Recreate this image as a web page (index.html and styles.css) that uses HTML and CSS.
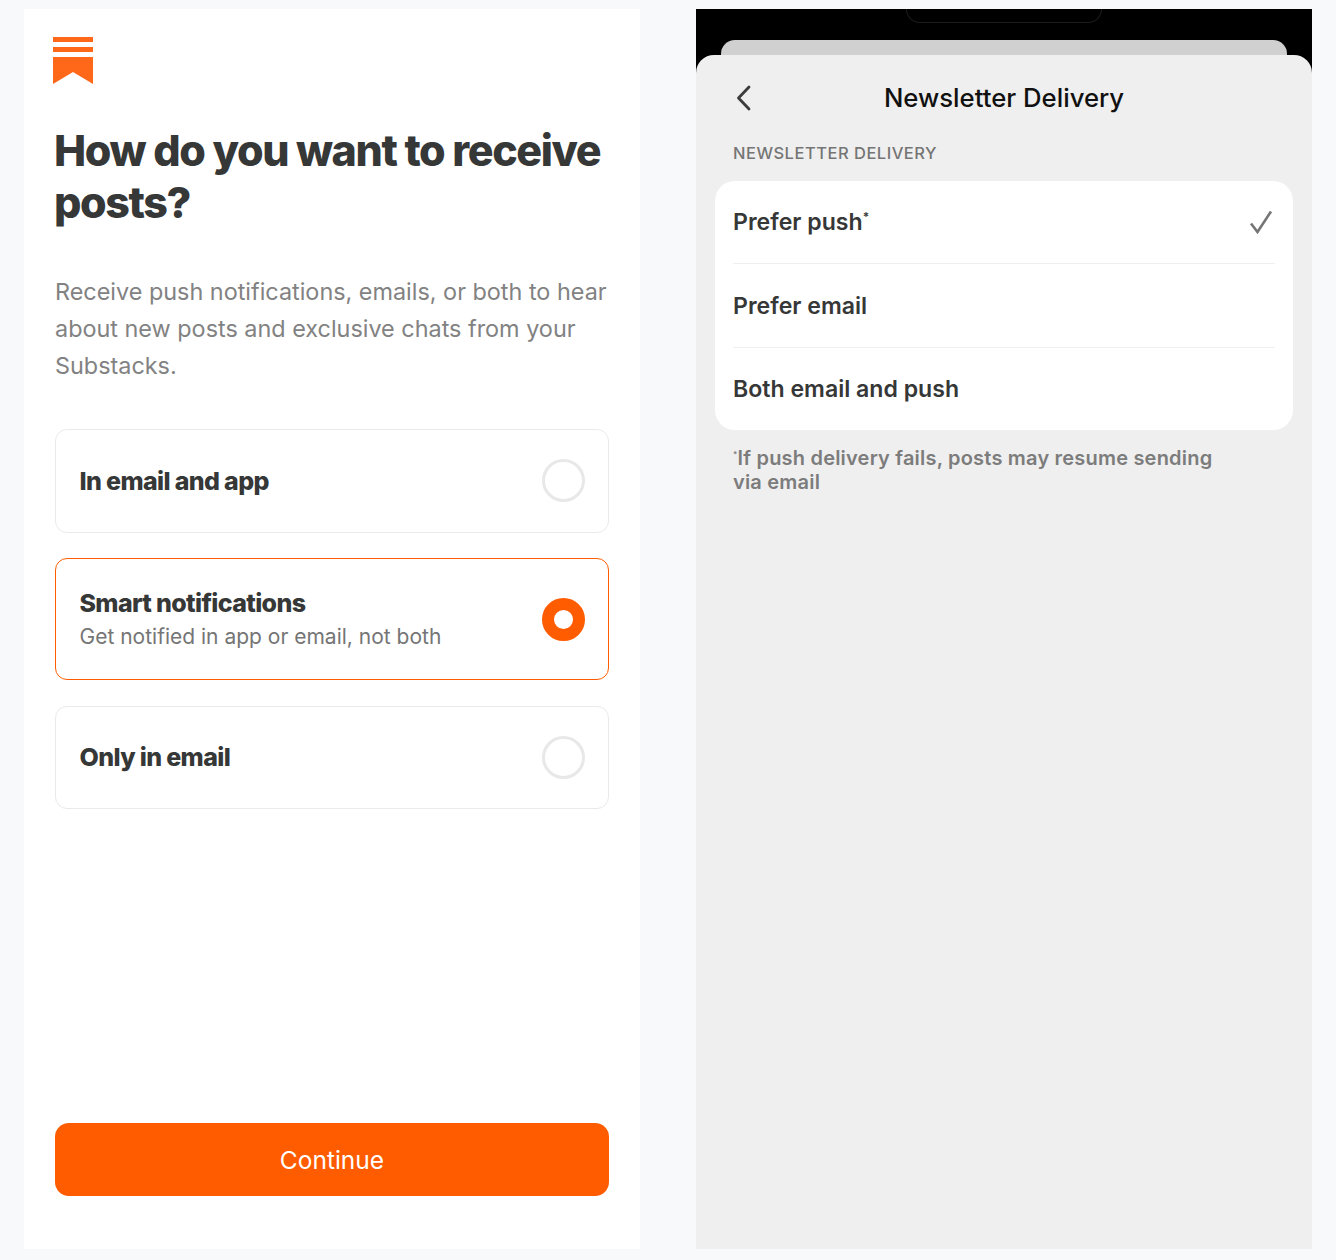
FILE: index.html
```html
<!DOCTYPE html>
<html lang="en">
<head>
  <meta charset="UTF-8" />
  <meta name="viewport" content="width=device-width, initial-scale=1.0"/>
  <title>Newsletter delivery</title>
  <link rel="stylesheet" href="styles.css">
</head>
<body>
  <div class="screens">
    <section class="onboarding">
      <svg class="logo" width="40" height="47" viewBox="0 0 40 47">
        <path d="M0 0H40V5H0ZM0 10H40V15H0ZM0 20H40V47L20 35 0 47Z" fill="#ff6719"/>
      </svg>
      <h1>How do you want to receive posts?</h1>
      <p class="intro">Receive push notifications, emails, or both to hear about new posts and exclusive chats from your Substacks.</p>

      <div class="options">
        <div class="option">
          <div class="option-title">In email and app</div>
          <span class="radio"></span>
        </div>
        <div class="option option-selected">
          <div>
            <div class="option-title">Smart notifications</div>
            <div class="option-sub">Get notified in app or email, not both</div>
          </div>
          <span class="radio radio-on"></span>
        </div>
        <div class="option">
          <div class="option-title">Only in email</div>
          <span class="radio"></span>
        </div>
      </div>

      <button class="continue">Continue</button>
    </section>

    <section class="phone">
      <div class="status"><div class="notch"></div></div>
      <div class="back-sheet"></div>
      <div class="sheet">
        <div class="nav">
          <svg class="back" width="16" height="26" viewBox="0 0 16 26">
            <path d="M13 2 2.500 13 13 24" fill="none" stroke="#3c3c3c" stroke-width="2.800" stroke-linecap="round" stroke-linejoin="round"/>
          </svg>
          <h2>Newsletter Delivery</h2>
        </div>
        <div class="section-label">NEWSLETTER DELIVERY</div>
        <div class="list">
          <div class="row">
            <span>Prefer push<sup>*</sup></span>
            <svg width="24" height="24" viewBox="0 0 24 24">
              <path d="M2 13.500 8.500 22 22 1.500" fill="none" stroke="#757575" stroke-width="2.600"/>
            </svg>
          </div>
          <div class="row"><span>Prefer email</span></div>
          <div class="row"><span>Both email and push</span></div>
        </div>
        <p class="footnote"><sup>*</sup>If push delivery fails, posts may resume sending via email</p>
      </div>
    </section>
  </div>
</body>
</html>
```

FILE: styles.css
```css
* {
  box-sizing: border-box;
}

body {
  margin: 0;
  padding: 9px 24px 11px;
  background: #f8f9fb;
  font-family: 'Inter', sans-serif;
  color: #363737;
}

.screens {
  display: flex;
  gap: 56px;
  height: 1240px;
}

.onboarding {
  width: 616px;
  display: flex;
  flex-direction: column;
  padding: 28px 31px 53px;
  background: #fff;
}

.logo {
  display: block;
  margin-left: -2px;
}

h1 {
  margin: 40px 0 0 -1px;
  font-size: 43px;
  line-height: 52px;
  font-weight: 800;
  letter-spacing: -1.4px;
}

.intro {
  margin: 45px -6px 0 0;
  font-size: 23.400px;
  line-height: 37px;
  color: #828282;
}

.options {
  display: flex;
  flex-direction: column;
  gap: 25.500px;
  margin-top: 45px;
}

.option {
  display: flex;
  justify-content: space-between;
  align-items: center;
  min-height: 103.500px;
  padding: 0 23px 0 23.500px;
  border: 1.500px solid #eaeaea;
  border-radius: 12px;
}

.option-selected {
  min-height: 122px;
  border-color: #ff5c00;
}

.option-title {
  font-size: 25px;
  line-height: 32px;
  font-weight: 800;
  letter-spacing: -0.65px;
}

.option-sub {
  margin-top: 3px;
  font-size: 21px;
  line-height: 30px;
  color: #757575;
}

.radio {
  width: 43px;
  height: 43px;
  border: 3px solid #e8e8e8;
  border-radius: 50%;
}

.radio-on {
  border: 12px solid #ff5c00;
}

.continue {
  margin-top: auto;
  height: 73px;
  border: none;
  border-radius: 14px;
  background: #ff5c00;
  color: #fff;
  font-family: 'Inter', sans-serif;
  font-size: 24.500px;
}

.phone {
  width: 616px;
  display: flex;
  flex-direction: column;
  background: #000;
}

.status {
  height: 31px;
  display: flex;
  justify-content: center;
}

.notch {
  width: 196px;
  height: 14px;
  border: 1px solid #1c1c1c;
  border-top: none;
  border-radius: 0 0 20px 20px;
}

.back-sheet {
  height: 15px;
  margin: 0 25px;
  background: #d0d0d0;
  border-radius: 14px 14px 0 0;
}

.sheet {
  flex: 1;
  padding: 0 19px;
  background: #efefef;
  border-radius: 18px 18px 0 0;
}

.nav {
  height: 85px;
  display: flex;
  align-items: center;
  justify-content: center;
  position: relative;
}

.back {
  position: absolute;
  left: 21px;
  top: 30px;
}

h2 {
  margin: 0;
  font-size: 25.700px;
  font-weight: 500;
  color: #111;
}

.section-label {
  margin: 3px 0 18px 18px;
  font-size: 16.500px;
  line-height: 20px;
  letter-spacing: 0.5px;
  font-weight: 500;
  color: #757575;
}

.list {
  padding: 0 18px;
  background: #fff;
  border-radius: 20px;
}

.row {
  height: 83px;
  display: flex;
  align-items: center;
  justify-content: space-between;
  padding-right: 2px;
  border-bottom: 1px solid #efefef;
  font-size: 23.100px;
  font-weight: 600;
  color: #363737;
}

.row:nth-child(2) {
  height: 84px;
}

.row:last-child {
  height: 82px;
  border-bottom: none;
}

.row sup {
  font-size: 12px;
  line-height: 0;
}

.footnote {
  margin: 16px 60px 0 18px;
  font-size: 20px;
  line-height: 24px;
  letter-spacing: 0.2px;
  font-weight: 600;
  color: #7c7c7c;
}

.footnote sup {
  font-size: 8px;
  line-height: 0;
}
```
